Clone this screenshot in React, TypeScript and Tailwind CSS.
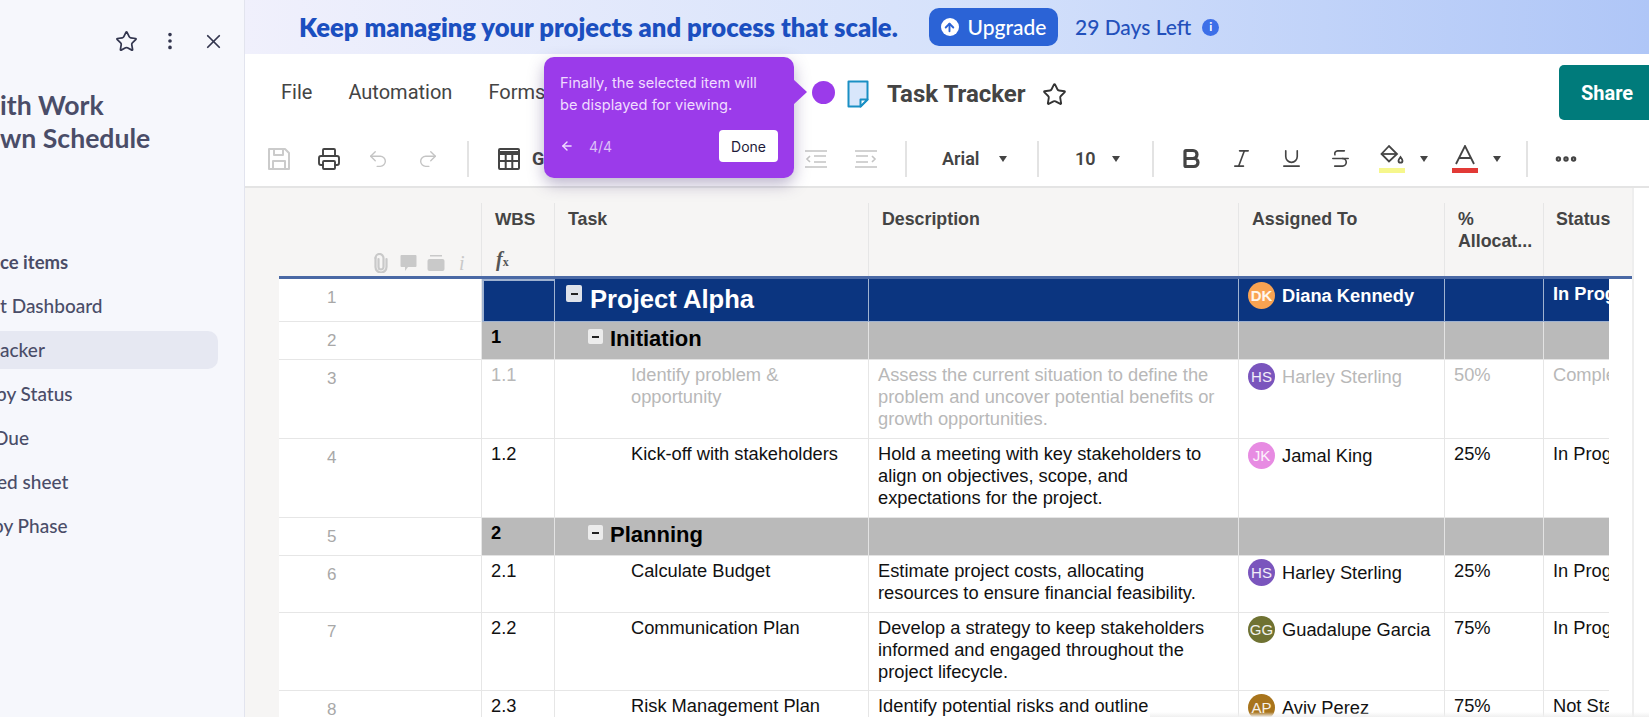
import { Star, MoreVertical, X, Printer, Undo2, Redo2, Bold, Italic, Underline, Strikethrough, MoreHorizontal, ArrowLeft, ArrowUp } from 'lucide-react';
import type { ReactNode } from 'react';

type Person = { initials: string; name: string; color: string };

const DK: Person = { initials: 'DK', name: 'Diana Kennedy', color: 'bg-[#f9a352]' };
const HS: Person = { initials: 'HS', name: 'Harley Sterling', color: 'bg-[#7a55bd]' };
const JK: Person = { initials: 'JK', name: 'Jamal King', color: 'bg-[#e78be2]' };
const GG: Person = { initials: 'GG', name: 'Guadalupe Garcia', color: 'bg-[#6f7232]' };
const AP: Person = { initials: 'AP', name: 'Aviv Perez', color: 'bg-[#a8741c]' };

type Row = {
  num: number;
  height: string;
  kind: 'project' | 'phase' | 'task';
  muted?: boolean;
  wbs?: string;
  task: string;
  desc?: string[];
  who?: Person;
  pct?: string;
  status?: string;
};

const rows: Row[] = [
  { num: 1, height: 'h-[43px]', kind: 'project', task: 'Project Alpha', who: DK, status: 'In Progress' },
  { num: 2, height: 'h-[38px]', kind: 'phase', wbs: '1', task: 'Initiation' },
  { num: 3, height: 'h-[79px]', kind: 'task', muted: true, wbs: '1.1', task: 'Identify problem & opportunity', desc: ['Assess the current situation to define the', 'problem and uncover potential benefits or', 'growth opportunities.'], who: HS, pct: '50%', status: 'Complete' },
  { num: 4, height: 'h-[79px]', kind: 'task', wbs: '1.2', task: 'Kick-off with stakeholders', desc: ['Hold a meeting with key stakeholders to', 'align on objectives, scope, and', 'expectations for the project.'], who: JK, pct: '25%', status: 'In Progress' },
  { num: 5, height: 'h-[38px]', kind: 'phase', wbs: '2', task: 'Planning' },
  { num: 6, height: 'h-[57px]', kind: 'task', wbs: '2.1', task: 'Calculate Budget', desc: ['Estimate project costs, allocating', 'resources to ensure financial feasibility.'], who: HS, pct: '25%', status: 'In Progress' },
  { num: 7, height: 'h-[78px]', kind: 'task', wbs: '2.2', task: 'Communication Plan', desc: ['Develop a strategy to keep stakeholders', 'informed and engaged throughout the', 'project lifecycle.'], who: GG, pct: '75%', status: 'In Progress' },
  { num: 8, height: 'h-[78px]', kind: 'task', wbs: '2.3', task: 'Risk Management Plan', desc: ['Identify potential risks and outline'], who: AP, pct: '75%', status: 'Not Started' },
];

function Caret({ className }: { className: string }) {
  return <span className={`h-0 w-0 shrink-0 border-x-[4px] border-t-[6px] border-x-transparent border-t-[#444] ${className}`} />;
}

function Sep({ className }: { className: string }) {
  return <span className={`h-[36px] w-[2px] shrink-0 bg-[#e3e3e3] ${className}`} />;
}

function Toggle({ big }: { big?: boolean }) {
  return (
    <span className={`flex shrink-0 items-center justify-center rounded-[2px] ${big ? 'h-[17px] w-[16px] bg-[#dfe3ea]' : 'h-[15px] w-[15px] bg-[#ececec]'}`}>
      <span className="h-[2px] w-[7px] bg-[#222]" />
    </span>
  );
}

function Sidebar() {
  // the panel is scrolled sideways in the shot, so labels start cut off
  const links = [
    { label: 't Dashboard', shift: '' },
    { label: 'acker', shift: '' },
    { label: 'py Status', shift: '-ml-[4px]' },
    { label: 'Due', shift: '-ml-[6px]' },
    { label: 'ed sheet', shift: '-ml-[3px]' },
    { label: 'py Phase', shift: '-ml-[7px]' },
  ];
  return (
    <aside className="flex h-full w-[245px] shrink-0 flex-col overflow-hidden border-r border-[#e2e4ee] bg-[#f6f7fc] font-['Lato',sans-serif] text-[#4a4d68]">
      <div className="flex h-[82px] items-center justify-end gap-[21px] pr-[19px] text-[#33364f]">
        <Star size={23} strokeWidth={1.8} />
        <MoreVertical size={22} strokeWidth={2} />
        <X size={23} strokeWidth={1.8} />
      </div>
      <div className="mt-[7px] whitespace-nowrap text-[26.6px] font-bold leading-[33px]">
        <div>ith Work</div>
        <div>wn Schedule</div>
      </div>
      <div className="mt-[96px] text-[18.5px] font-bold leading-[22px]">ce items</div>
      <div className="mt-[14px] flex flex-col gap-[6px] pr-[26px] text-[19px] font-medium">
        {links.map(l => (
          <div key={l.label} className={`flex h-[38px] items-center rounded-r-[10px] whitespace-nowrap ${l.label === 'acker' ? 'bg-[#e6e8f2]' : ''}`}>
            <span className={l.shift}>{l.label}</span>
          </div>
        ))}
      </div>
    </aside>
  );
}

function Banner() {
  return (
    <div className="flex h-[54px] shrink-0 items-center bg-gradient-to-r from-[#f0f0fc] via-[#d6e2fb] to-[#afc6f7] pl-[54px] font-['Lato',sans-serif]">
      <span className="w-[597px] whitespace-nowrap text-[25.6px] font-extrabold text-[#1b4fc0]">Keep managing your projects and process that scale.</span>
      <button className="ml-[33px] flex h-[38px] w-[129px] items-center justify-center gap-[9px] rounded-[10px] bg-[#2b63d6] text-[21px] font-medium text-white">
        <span className="flex h-[18px] w-[18px] items-center justify-center rounded-full bg-white">
          <ArrowUp size={13} strokeWidth={3.5} className="text-[#2b63d6]" />
        </span>
        Upgrade
      </button>
      <span className="ml-[17px] whitespace-nowrap text-[21px] font-medium text-[#2350bb]">29 Days Left</span>
      <span className="ml-[11px] flex h-[17px] w-[17px] items-center justify-center rounded-full bg-[#3d6fe8] text-[12px] font-bold leading-none text-white">i</span>
    </div>
  );
}

function MenuRow() {
  return (
    <div className="relative flex h-[80px] shrink-0 items-start bg-white font-['Roboto',sans-serif] text-[20px] text-[#444]">
      <div className="flex items-center gap-[36px] pl-[36px] pt-[23px]">
        <span>File</span>
        <span>Automation</span>
        <span>Forms</span>
      </div>
      <div className="ml-auto mt-[11px] flex h-[55px] w-[90px] items-center rounded-l-[5px] bg-[#007b7b] pl-[22px] text-[20px] font-bold text-white">Share</div>
      {/* document title sits after the tour tooltip */}
      <div className="absolute left-[601px] top-[22px] flex items-center">
        <svg width="24" height="28" viewBox="0 0 24 28" className="shrink-0">
          <path d="M2.500 1.500h19v18l-7 7h-12z" fill="#d8e6fb" stroke="#1a8fc4" strokeWidth="2" strokeLinejoin="round" />
          <path d="M21.500 19.500h-7v7z" fill="#fff" stroke="#1a8fc4" strokeWidth="2" strokeLinejoin="round" />
        </svg>
        <span className="ml-[17px] whitespace-nowrap text-[24px] font-bold text-[#444]">Task Tracker</span>
        <Star size={25} strokeWidth={1.8} className="ml-[16px] text-[#333]" />
      </div>
    </div>
  );
}

function IndentIcon({ flip, className }: { flip?: boolean; className?: string }) {
  return (
    <svg width="22" height="20" viewBox="0 0 22 20" fill="none" stroke="#c4c4c4" strokeWidth="1.6" className={`shrink-0 ${className ?? ''}`}>
      <path d="M0 2h22M0 18h22" />
      {flip ? <path d="M1 7h12M1 13h12M17 7l3 3-3 3" /> : <path d="M9 7h12M9 13h12M5 7l-3 3 3 3" />}
    </svg>
  );
}

function ToolIcon({ x, children }: { x: string; children: ReactNode }) {
  return <span className={`flex shrink-0 items-center justify-center ${x}`}>{children}</span>;
}

function Toolbar() {
  return (
    <div className="flex h-[54px] shrink-0 items-center border-b-2 border-[#e4e4e4] bg-white pl-[22px] pb-[3px] font-['Roboto',sans-serif] text-[#444]">
      <ToolIcon x="w-[24px]">
        <svg width="24" height="24" viewBox="0 0 24 24" fill="none" stroke="#cbcbcb" strokeWidth="2" strokeLinejoin="round">
          <path d="M2 2h16l4 4v16H2z" />
          <path d="M7 2v6h9V2M6 22v-8h12v8" />
        </svg>
      </ToolIcon>
      <ToolIcon x="ml-[26px] w-[24px]"><Printer size={26} strokeWidth={1.9} /></ToolIcon>
      <ToolIcon x="ml-[26px] w-[22px]"><Undo2 size={24} strokeWidth={1.5} className="text-[#c4c4c4]" /></ToolIcon>
      <ToolIcon x="ml-[28px] w-[22px]"><Redo2 size={24} strokeWidth={1.5} className="text-[#c4c4c4]" /></ToolIcon>
      <Sep className="ml-[28px]" />
      <ToolIcon x="ml-[28px] w-[24px]">
        <svg width="24" height="24" viewBox="0 0 24 24" fill="none" stroke="#444" strokeWidth="2">
          <rect x="2" y="2" width="20" height="20" rx="1" />
          <path d="M2 6h20" strokeWidth="4" />
          <path d="M2 14h20M8.700 8v14M15.300 8v14" />
        </svg>
      </ToolIcon>
      <span className="ml-[11px] w-[273px] shrink-0 text-[18px] font-bold">G</span>
      <IndentIcon />
      <IndentIcon flip className="ml-[28px]" />
      <Sep className="ml-[28px]" />
      <span className="ml-[35px] w-[40px] shrink-0 text-[18px] font-semibold">Arial</span>
      <Caret className="ml-[17px]" />
      <Sep className="ml-[30px]" />
      <span className="ml-[36px] w-[22px] shrink-0 text-[18px] font-semibold">10</span>
      <Caret className="ml-[15px]" />
      <Sep className="ml-[32px]" />
      <ToolIcon x="ml-[25px] w-[24px]"><Bold size={25} strokeWidth={3.2} /></ToolIcon>
      <ToolIcon x="ml-[26px] w-[24px]"><Italic size={23} strokeWidth={1.7} /></ToolIcon>
      <ToolIcon x="ml-[26px] w-[24px]"><Underline size={23} strokeWidth={1.7} /></ToolIcon>
      <ToolIcon x="ml-[25px] w-[24px]"><Strikethrough size={23} strokeWidth={1.7} /></ToolIcon>
      <span className="relative ml-[27px] flex h-[28px] w-[26px] shrink-0 flex-col items-center">
        <svg width="24" height="20" viewBox="0 0 24 20" fill="none" stroke="#444" strokeWidth="1.8">
          <path d="M9 1 1.500 9 9 16.500 17 9z" />
          <path d="M1.500 9H17" />
          <path d="M20.500 12c1.400 1.800 2 2.700 2 3.700a2 2 0 0 1-4 0c0-1 .6-1.900 2-3.700z" />
        </svg>
        <span className="absolute bottom-0 h-[5px] w-[26px] bg-[#f6f78c]" />
      </span>
      <Caret className="ml-[15px]" />
      <span className="relative ml-[24px] flex h-[28px] w-[26px] shrink-0 flex-col items-center">
        <svg width="22" height="20" viewBox="0 0 22 20" fill="none" stroke="#444" strokeWidth="1.8">
          <path d="M2 19 11 1l9 18M5.500 13h11" />
        </svg>
        <span className="absolute bottom-0 h-[5px] w-[26px] bg-[#e23a36]" />
      </span>
      <Caret className="ml-[15px]" />
      <Sep className="ml-[25px]" />
      <ToolIcon x="ml-[25px] w-[26px]"><MoreHorizontal size={26} strokeWidth={3} /></ToolIcon>
    </div>
  );
}

function Avatar({ p }: { p: Person }) {
  return (
    <span className={`flex h-[27px] w-[27px] shrink-0 items-center justify-center rounded-full text-[15px] text-white/90 ${p.color}`}>{p.initials}</span>
  );
}

function SheetRow({ r }: { r: Row }) {
  const tint = r.kind === 'project' ? 'bg-[#0b3580] text-white font-bold border-[#9fb2d0]' : r.kind === 'phase' ? 'bg-[#bababa] text-black font-bold border-[#e3e3e3]' : `bg-white border-[#e6e6e6] ${r.muted ? 'text-[#b8b8b8]' : 'text-[#111]'}`;
  const cell = `border-r border-b px-[9px] overflow-hidden ${tint}`;
  return (
    <div className={`grid grid-cols-[203px_73px_314px_370px_206px_99px_65px] ${r.height}`}>
      <div className="flex items-start justify-start border-b border-r border-[#e6e6e6] bg-white pl-[48px] pt-[8px] text-[17px] text-[#a8a8a8]">{r.num}</div>
      <div className={`${cell} pt-[4px] ${r.num === 1 ? 'border-2 border-[#8f99a8]' : ''}`}>{r.wbs}</div>
      <div className={`${cell} ${r.kind === 'task' ? 'pl-[76px] pt-[4px]' : ''}`}>
        {r.kind === 'project' && (
          <div className="flex items-start pl-[2px] pt-[6px] text-[25.6px] leading-[28px]">
            <Toggle big />
            <span className="ml-[8px] whitespace-nowrap">{r.task}</span>
          </div>
        )}
        {r.kind === 'phase' && (
          <div className="flex items-start pl-[24px] pt-[4px] text-[22px] leading-[26px]">
            <span className="mt-[3px]"><Toggle /></span>
            <span className="ml-[7px] whitespace-nowrap">{r.task}</span>
          </div>
        )}
        {r.kind === 'task' && r.task}
      </div>
      <div className={`${cell} pt-[4px]`}>
        {r.desc?.map(d => <div key={d} className="whitespace-nowrap">{d}</div>)}
      </div>
      <div className={`${cell} flex items-start pt-[3px] whitespace-nowrap`}>
        {r.who && (
          <>
            <Avatar p={r.who} />
            <span className="ml-[7px] mt-[3px]">{r.who.name}</span>
          </>
        )}
      </div>
      <div className={`${cell} pt-[4px]`}>{r.pct}</div>
      <div className={`${cell} pt-[4px] whitespace-nowrap border-r-0`}>{r.status}</div>
    </div>
  );
}

function RowIcons() {
  return (
    <div className="flex items-center justify-end border-r border-[#e6e6e6] pb-[3px] pr-[15px] pt-[50px]">
      <svg width="16" height="20" viewBox="0 0 16 20" fill="none" stroke="#c9c9c9" strokeWidth="2.200" strokeLinecap="round">
        <path d="M5.500 6v8a2.500 2.500 0 0 0 5 0V5a4 4 0 0 0-8 0" />
        <path d="M2.500 5v9a5.500 5.500 0 0 0 11 0V6" />
      </svg>
      <svg width="17" height="18" viewBox="0 0 17 18" className="ml-[11px]" fill="#c9c9c9">
        <path d="M1.500 1h14a1 1 0 0 1 1 1v10a1 1 0 0 1-1 1H8l-3 4v-4H1.500a1 1 0 0 1-1-1V2a1 1 0 0 1 1-1z" />
      </svg>
      <svg width="18" height="18" viewBox="0 0 18 18" className="ml-[10px]" fill="#c9c9c9">
        <rect x="3" y="1" width="12" height="1.500" />
        <rect x="0.500" y="5" width="17" height="12" rx="2" />
      </svg>
      <span className="ml-[14px] w-[7px] font-['Liberation_Serif',serif] text-[20px] font-normal italic leading-[20px] text-[#c9c9c9]">i</span>
    </div>
  );
}

function Sheet() {
  return (
    <div className="relative h-full overflow-hidden bg-white font-['Liberation_Sans',Arial,sans-serif] text-[18.3px] leading-[22px]">
      {/* thin rule closing the sheet after the scrollbar gutter */}
      <div className="h-full w-[1355px] border-r-2 border-[#eeeeee]">
        <div className="grid h-[88px] w-[1353px] grid-cols-[203px_73px_314px_370px_206px_99px_88px] bg-[#f6f5f4] pt-[15px] text-[17.8px] font-bold text-[#444]">
          <RowIcons />
          <div className="relative border-r border-[#e6e6e6] px-[13px] pt-[5px] text-[17.3px]">
            WBS
            <span className="absolute bottom-[4px] left-[14px] font-['Liberation_Serif',serif] text-[20px] italic leading-[20px] text-[#555]">f<span className="text-[12px] not-italic">x</span></span>
          </div>
          <div className="border-r border-[#e6e6e6] pl-[13px] pt-[5px]">Task</div>
          <div className="border-r border-[#e6e6e6] pl-[13px] pt-[5px]">Description</div>
          <div className="border-r border-[#e6e6e6] pl-[13px] pt-[5px]">Assigned To</div>
          <div className="border-r border-[#e6e6e6] pl-[13px] pt-[5px]">%<br />Allocat...</div>
          <div className="pl-[12px] pt-[5px]">Status</div>
        </div>
        <div className="h-[3px] w-[1353px] bg-[#4a69a5]" />
        <div className="w-[1330px] overflow-hidden">
          {rows.map(r => <SheetRow key={r.num} r={r} />)}
        </div>
      </div>
      <div className="absolute bottom-0 left-[871px] right-0 h-[5px] bg-gradient-to-b from-transparent to-[#f0f0f0]" />
    </div>
  );
}

function TourTip() {
  return (
    <div className="absolute left-[544px] top-[57px] z-10 flex h-[121px] w-[250px] flex-col rounded-[10px] bg-[#9b3bea] pl-[16px] pr-[16px] pt-[15px] font-['Inter',sans-serif] text-white shadow-[0_6px_16px_rgba(60,40,110,0.35)]">
      <p className="whitespace-nowrap text-[14.6px] leading-[22px] text-[#f0dcff]">Finally, the selected item will<br />be displayed for viewing.</p>
      <div className="mt-[14px] flex items-center text-[14px] text-[#dcc0f7]">
        <ArrowLeft size={14} strokeWidth={2.400} className="text-[#f0dcff]" />
        <span className="ml-[15px]">4/4</span>
        <button className="ml-auto h-[32px] w-[59px] rounded-[4px] bg-white text-[14px] text-[#1e1a3a]">Done</button>
      </div>
      <span className="absolute -right-[13px] top-[22px] h-0 w-0 border-y-[13px] border-l-[14px] border-y-transparent border-l-[#9b3bea]" />
      <span className="absolute -right-[41px] top-[24px] h-[23px] w-[23px] rounded-full bg-[#9b3bea]" />
    </div>
  );
}

export default function App() {
  return (
    <div className="relative flex h-[717px] w-[1649px] overflow-hidden bg-white">
      <Sidebar />
      <main className="flex min-w-0 flex-1 flex-col">
        <Banner />
        <MenuRow />
        <Toolbar />
        <div className="min-h-0 flex-1 bg-[#f6f5f4] pl-[34px]">
          <Sheet />
        </div>
      </main>
      <TourTip />
    </div>
  );
}
